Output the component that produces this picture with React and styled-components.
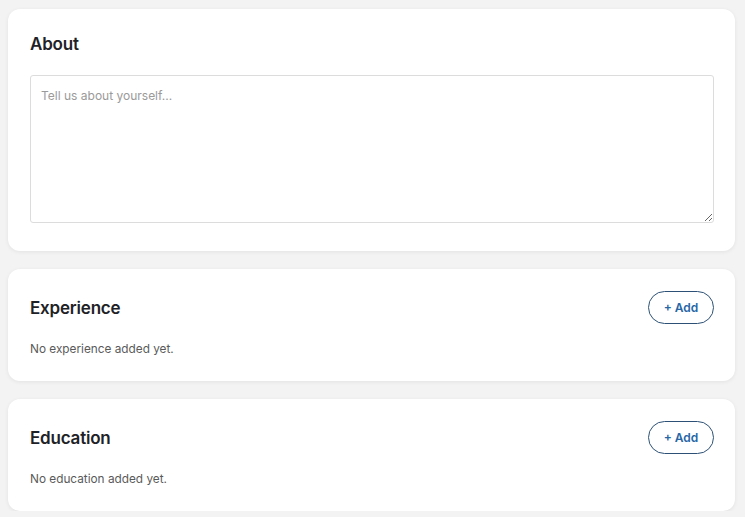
import React from "react";
import styled, { createGlobalStyle } from "styled-components";

const Global = createGlobalStyle`
  html, body { margin: 0; padding: 0; background: #f3f3f3; }
  body { font-family: Inter, "Noto Sans", Arial, sans-serif; color: #1e2226; }
  * { box-sizing: border-box; }
`;

const Page = styled.div`
  display: flex;
  flex-direction: column;
  gap: 18px;
  padding: 9px 10px 0 8px;
`;

const Card = styled.section`
  background: #fff;
  border-radius: 12px;
  box-shadow: 0 1px 4px rgba(0, 0, 0, 0.07);
  padding: 22px 21px ${(p) => p.$bottom || "22px"} 22px;
  display: flex;
  flex-direction: column;
  gap: ${(p) => p.$gap || "16px"};
`;

const Header = styled.div`
  display: flex;
  align-items: center;
  justify-content: space-between;
  min-height: ${(p) => (p.$tall ? "33px" : "auto")};
`;

const Title = styled.h2`
  margin: ${(p) => (p.$top ? "2px 0 0" : "0")};
  font-size: 17px;
  font-weight: 600;
  letter-spacing: -0.2px;
  color: #1e2226;
  line-height: 22px;
`;

const AddButton = styled.button`
  height: 33px;
  width: 66px;
  border-radius: 999px;
  border: 1px solid #2d5176;
  background: #fff;
  color: #2666a6;
  font-family: inherit;
  font-size: 12px;
  font-weight: 600;
  padding: 0;
  cursor: pointer;
`;

const TextArea = styled.textarea`
  display: block;
  width: 100%;
  height: 148px;
  margin-bottom: 6px;
  border: 1px solid #dcdcdc;
  border-radius: 3px;
  padding: 12px 10px;
  font-family: inherit;
  font-size: 12px;
  color: #333;
  resize: vertical;
  outline: none;
  &::placeholder { color: #9a9a9a; }
`;

const Empty = styled.p`
  margin: 0;
  font-size: 11.8px;
  color: #5a5a5a;
  line-height: 19px;
`;

function Section({ title, empty }) {
  return (
    <Card $gap="16px" $bottom="22px">
      <Header $tall>
        <Title>{title}</Title>
        <AddButton>+ Add</AddButton>
      </Header>
      <Empty>{empty}</Empty>
    </Card>
  );
}

export default function App() {
  return (
    <>
      <Global />
      <Page>
        <Card $gap="20px">
          <Header>
            <Title $top>About</Title>
          </Header>
          <TextArea placeholder="Tell us about yourself..." />
        </Card>
        <Section title="Experience" empty="No experience added yet." />
        <Section title="Education" empty="No education added yet." />
      </Page>
    </>
  );
}
